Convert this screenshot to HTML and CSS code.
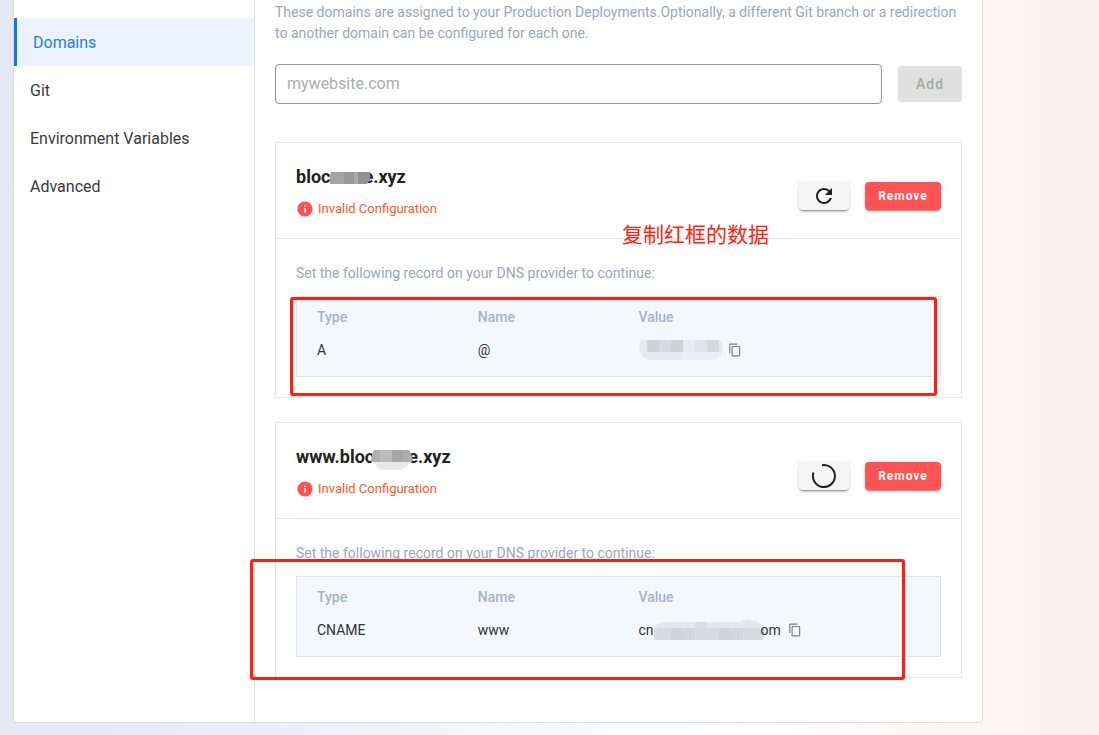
FILE: index.html
```html
<!DOCTYPE html>
<html lang="en">
<head>
<meta charset="utf-8">
<meta name="viewport" content="width=device-width, initial-scale=1">
<title>Domains</title>
<link rel="stylesheet" href="styles.css">
</head>
<body>
<svg class="defs" width="0" height="0" aria-hidden="true">
  <symbol id="info" viewBox="0 0 24 24"><path fill="currentColor" d="M12 2C6.48 2 2 6.48 2 12s4.48 10 10 10 10-4.48 10-10S17.52 2 12 2zm1 15h-2v-6h2v6zm0-8h-2V7h2v2z"/></symbol>
  <symbol id="copy" viewBox="0 0 24 24"><path fill="currentColor" d="M16 1H4c-1.100 0-2 .9-2 2v14h2V3h12V1zm3 4H8c-1.100 0-2 .9-2 2v14c0 1.100.9 2 2 2h11c1.100 0 2-.9 2-2V7c0-1.100-.9-2-2-2zm0 16H8V7h11v14z"/></symbol>
  <symbol id="refresh" viewBox="0 0 24 24"><path fill="currentColor" d="M17.650 6.350C16.200 4.900 14.210 4 12 4c-4.420 0-7.990 3.580-7.990 8s3.570 8 7.990 8c3.730 0 6.840-2.550 7.730-6h-2.080c-.82 2.330-3.040 4-5.650 4-3.310 0-6-2.690-6-6s2.690-6 6-6c1.660 0 3.140.69 4.220 1.780L13 11h7V4l-2.350 2.350z"/></symbol>
</svg>
<div class="panel">
  <nav class="sidebar" aria-label="Settings">
    <a class="nav-item active" href="#domains" aria-current="page">Domains</a>
    <a class="nav-item" href="#git">Git</a>
    <a class="nav-item" href="#env">Environment Variables</a>
    <a class="nav-item" href="#advanced">Advanced</a>
  </nav>
  <main class="content">
    <p class="intro">These domains are assigned to your Production Deployments.Optionally, a different Git branch or a redirection to another domain can be configured for each one.</p>
    <form class="add-form">
      <input class="domain-input" type="text" placeholder="mywebsite.com" aria-label="Domain name">
      <button class="add-button" type="button" disabled>Add</button>
    </form>
    <div class="cards">
      <section class="card">
        <header class="card-head">
          <div class="card-title">
            <h2 class="domain">bloc<svg class="mask mask-a" viewBox="0 0 42 20" aria-hidden="true"><path fill="#a5a5a5" d="M2 5h14v12H1V9z"/><path fill="#999" d="M15 5h13v12H15z"/><path fill="#ababab" d="M25 5h6v12h-6z"/><path fill="#929292" d="M29 5h12v8l-3 4h-9z"/></svg>e.xyz</h2>
            <p class="status"><svg class="info-icon" aria-hidden="true"><use href="#info"/></svg>Invalid Configuration</p>
          </div>
          <div class="actions">
            <button class="refresh-button" type="button" aria-label="Refresh"><svg class="refresh-icon" aria-hidden="true"><use href="#refresh"/></svg></button>
            <button class="remove-button" type="button">Remove</button>
          </div>
        </header>
        <div class="card-body">
          <p class="hint">Set the following record on your DNS provider to continue:</p>
          <div class="records">
            <table class="record-table">
              <thead><tr><th>Type</th><th>Name</th><th colspan="2">Value</th></tr></thead>
              <tbody><tr><td>A</td><td>@</td><td colspan="2"><span class="value"><svg class="value-mask-a" viewBox="0 0 84 20" aria-hidden="true"><path fill="#e8eaf1" d="M5 0H79q5 0 5 6t-5 12q-3 2-8 2H10Q0 17 0 6q0-6 5-6z"/><path fill="#d0d2d7" d="M8 0h12v12H8zM32 0h12v12H32z"/><path fill="#d7d9de" d="M20 0h12v12H20zM68 0h12v12H68z"/><path fill="#e1e3e9" d="M56 0h12v12H56z"/><path fill="#eceff6" d="M44 12h40q-3 8-13 8H44z"/></svg><button class="copy-button" type="button" aria-label="Copy value"><svg class="copy-icon" aria-hidden="true"><use href="#copy"/></svg></button></span></td></tr></tbody>
            </table>
          </div>
        </div>
        <div class="mark mark-a"></div>
        <div class="note" lang="zh">复制红框的数据</div>
      </section>
      <section class="card">
        <header class="card-head">
          <div class="card-title">
            <h2 class="domain">www.bloc<svg class="mask mask-b" viewBox="0 -6 42 26" aria-hidden="true"><path fill="#e9e9e9" d="M3 12h36q-3 8-14 8H15Q6 20 3 12z"/><path fill="#b0b0b0" d="M3 0h10v12H0Q0 4 3 0z"/><path fill="#bbb" d="M9 0h12v12H9z"/><path fill="#a6a6a6" d="M21 0h12v12H21z"/><path fill="#adadad" d="M32 0h6q4 5 3 12h-9z"/></svg>e.xyz</h2>
            <p class="status"><svg class="info-icon" aria-hidden="true"><use href="#info"/></svg>Invalid Configuration</p>
          </div>
          <div class="actions">
            <button class="refresh-button" type="button" aria-label="Refreshing"><svg class="spinner-icon" viewBox="0 0 24 24" aria-hidden="true"><path fill="none" stroke="currentColor" stroke-width="2" d="M10 1.200A11 11 0 1 1 1.500 8.500"/></svg></button>
            <button class="remove-button" type="button">Remove</button>
          </div>
        </header>
        <div class="card-body">
          <p class="hint">Set the following record on your DNS provider to continue:</p>
          <div class="records">
            <table class="record-table">
              <thead><tr><th>Type</th><th>Name</th><th colspan="2">Value</th></tr></thead>
              <tbody><tr><td>CNAME</td><td>www</td><td colspan="2"><span class="value">cn<svg class="value-mask-b" viewBox="0 0 110 22" aria-hidden="true"><path fill="#e4e7ee" d="M0 11Q2 2 13 3h72q12-6 21 2 4 3 4 9v7H0z"/><path fill="#d9dbe0" d="M0 9h110v7q0 3-3 5H2q-2-2-2-5z"/><path fill="#d1d3d8" d="M17 9h12v12H17zM65 9h12v12H65z"/><path fill="#d4d6db" d="M29 9h12v12H29zM77 9h12v12H77z"/><path fill="#dadde4" d="M41 3h12v6H41z"/></svg>om<button class="copy-button" type="button" aria-label="Copy value"><svg class="copy-icon" aria-hidden="true"><use href="#copy"/></svg></button></span></td></tr></tbody>
            </table>
          </div>
        </div>
        <div class="mark mark-b"></div>
      </section>
    </div>
  </main>
</div>
</body>
</html>
```
FILE: styles.css
```css
* { box-sizing: border-box; }

body {
  margin: 0;
  padding: 0 116px 12px 13px;
  min-height: 100vh;
  font-family: Roboto, "Noto Sans CJK SC", sans-serif;
  font-size: 14px;
  color: #212121;
  background: linear-gradient(90deg, #e2e9f3 0%, #ebeff8 26%, #ffffff 68%, #f8f0f0 100%);
}

h2, p { margin: 0; font-weight: 400; }
button { font-family: inherit; border: 0; padding: 0; }
.defs { position: absolute; }

.panel {
  display: flex;
  background: #fff;
  border: 1px solid #dcdee1;
  border-top: 0;
  border-radius: 0 0 4px 4px;
}

.sidebar {
  flex: 0 0 241px;
  padding-top: 18px;
  border-right: 1px solid #e2e4e7;
}

.nav-item {
  display: block;
  padding: 2px 0 0 16px;
  font-size: 16px;
  line-height: 46px;
  color: #3a3a3a;
  text-decoration: none;
}

.nav-item.active {
  border-left: 3px solid #1976d2;
  color: #2a80d5;
  background: #ebf3ff;
}

.content {
  flex: 1;
  min-width: 0;
  padding: 2px 20px 44px;
}

.intro {
  line-height: 21px;
  color: #9ba7b9;
}

.add-form {
  display: flex;
  align-items: center;
  gap: 16px;
  margin: 20px 0 38px;
}

.domain-input {
  flex: 1;
  min-width: 0;
  height: 40px;
  padding: 0 11px 2px;
  border: 1px solid #959595;
  border-radius: 4px;
  font-family: inherit;
  font-size: 16px;
  color: #212121;
  background: #fff;
}

.domain-input::placeholder { color: #adadad; }

.add-button {
  width: 64px;
  height: 36px;
  border-radius: 4px;
  font-size: 14px;
  font-weight: 500;
  letter-spacing: 1px;
  color: #a6a6a6;
  background: #e0e0e0;
}

.cards {
  display: flex;
  flex-direction: column;
  gap: 24px;
}

.card {
  position: relative;
  border: 1px solid #e4e6e9;
}

.card-head {
  display: flex;
  align-items: center;
  padding: 20px 20px 19px;
  border-bottom: 1px solid #e4e6e9;
}

.card-title { flex: 1; }

.domain {
  display: flex;
  align-items: center;
  font-size: 18px;
  font-weight: 700;
  line-height: 28px;
}

.mask {
  position: relative;
  z-index: 1;
  width: 42px;
}

.mask-a { height: 20px; margin: 0 -8px 0 -1px; }
.mask-b { height: 26px; margin: 0 -5px 0 -3px; }

.status {
  display: flex;
  align-items: center;
  gap: 4px;
  margin-top: 8px;
  font-size: 13px;
  line-height: 20px;
  color: #ff5a1f;
}

.info-icon {
  width: 18px;
  height: 18px;
  color: #ff5252;
}

.actions {
  display: flex;
  gap: 16px;
  padding-top: 9px;
}

.refresh-button, .remove-button {
  display: flex;
  align-items: center;
  justify-content: center;
  height: 28px;
  border-radius: 4px;
  box-shadow: 0 2px 2px -1px rgba(0, 0, 0, .4), 0 1px 4px rgba(0, 0, 0, .16);
}

.refresh-button {
  width: 50px;
  color: #212121;
  background: #f5f5f5;
}

.remove-button {
  width: 76px;
  font-size: 12px;
  font-weight: 700;
  letter-spacing: 1px;
  color: #fff;
  background: #ff5252;
}

.refresh-icon, .spinner-icon { width: 24px; height: 24px; }

.card-body { padding: 24px 20px 20px; }

.hint {
  line-height: 21px;
  color: #9ba7b9;
}

.records {
  margin-top: 12px;
  padding: 3px 0 10px;
  border: 1px solid #e1e4ea;
  background: #f4f7fe;
}

.record-table {
  width: 100%;
  table-layout: fixed;
  border-collapse: collapse;
}

.record-table th, .record-table td {
  height: 33px;
  padding: 0 0 0 20px;
  text-align: left;
  font-weight: 400;
  white-space: nowrap;
}

.record-table th {
  font-weight: 500;
  color: #a6b3c7;
}

.record-table td { color: #333; }

.value { display: flex; align-items: center; }
.value-mask-a { width: 84px; height: 20px; }
.value-mask-b { width: 110px; height: 22px; margin-right: -3px; }

.copy-button {
  display: flex;
  margin-left: 7px;
  color: #7f7f7f;
  background: none;
}

.value-mask-a + .copy-button { margin-left: 5px; }
.copy-icon { width: 14px; height: 14px; }

.mark {
  position: absolute;
  border: 3px solid #ff1e10;
  border-radius: 3px;
  pointer-events: none;
}

.mark-a { left: 14px; right: 24px; top: 154px; height: 99px; }
.mark-b { left: -26px; right: 56px; top: 136px; height: 121px; }

.note {
  position: absolute;
  left: 346px;
  top: 75px;
  font-family: "Noto Sans CJK SC", sans-serif;
  font-size: 21px;
  font-weight: 400;
  line-height: 30px;
  color: #ff1e10;
}
```
